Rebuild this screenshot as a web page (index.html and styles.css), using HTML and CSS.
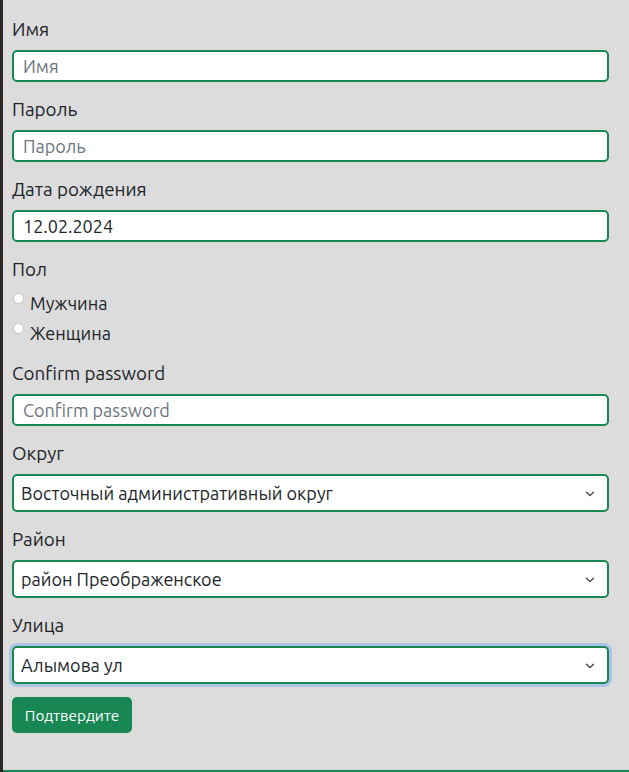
FILE: index.html
```html
<!DOCTYPE html>
<html lang="ru">
<head>
<meta charset="utf-8">
<title>Форма</title>
<link rel="stylesheet" href="styles.css">
</head>
<body>
<div class="page">
  <form class="form">
    <div class="group">
      <label class="label">Имя</label>
      <input class="input" type="text" placeholder="Имя">
    </div>
    <div class="group">
      <label class="label">Пароль</label>
      <input class="input" type="text" placeholder="Пароль">
    </div>
    <div class="group">
      <label class="label">Дата рождения</label>
      <input class="input" type="text" value="12.02.2024">
    </div>
    <div class="group group-radio">
      <label class="label label-radio">Пол</label>
      <div class="radio-row"><span class="radio"></span><span>Мужчина</span></div>
      <div class="radio-row"><span class="radio"></span><span>Женщина</span></div>
    </div>
    <div class="group">
      <label class="label">Confirm password</label>
      <input class="input" type="text" placeholder="Confirm password">
    </div>
    <div class="group">
      <label class="label">Округ</label>
      <div class="select">
        <span class="select-text">Восточный административный округ</span>
        <svg class="chevron" width="10" height="6" viewBox="0 0 10 6"><path d="M1.5 1.2 L5 4.6 L8.5 1.2" fill="none" stroke="#343a40" stroke-width="1.3" stroke-linecap="round" stroke-linejoin="round"/></svg>
      </div>
    </div>
    <div class="group">
      <label class="label">Район</label>
      <div class="select">
        <span class="select-text">район Преображенское</span>
        <svg class="chevron" width="10" height="6" viewBox="0 0 10 6"><path d="M1.5 1.2 L5 4.6 L8.5 1.2" fill="none" stroke="#343a40" stroke-width="1.3" stroke-linecap="round" stroke-linejoin="round"/></svg>
      </div>
    </div>
    <div class="group group-last">
      <label class="label">Улица</label>
      <div class="select select-focus">
        <span class="select-text">Алымова ул</span>
        <svg class="chevron" width="10" height="6" viewBox="0 0 10 6"><path d="M1.5 1.2 L5 4.6 L8.5 1.2" fill="none" stroke="#343a40" stroke-width="1.3" stroke-linecap="round" stroke-linejoin="round"/></svg>
      </div>
    </div>
    <button class="btn" type="button">Подтвердите</button>
  </form>
  <div class="footer-line"></div>
</div>
</body>
</html>
```
FILE: styles.css
```css
* { box-sizing: border-box; }
html, body { margin: 0; padding: 0; }
body {
  background: #dcdcdc;
  font-family: "Ubuntu", "Noto Sans", "Open Sans", sans-serif;
  color: #212529;
  font-size: 18px;
}
.page {
  min-height: 100vh;
  border-left: 3px solid #2b2622;
  display: flex;
  flex-direction: column;
}
.form {
  padding: 18px 20px 0 9px;
  display: flex;
  flex-direction: column;
}
.group {
  display: flex;
  flex-direction: column;
  margin-bottom: 16px;
}
.group-radio { margin-bottom: 14px; }
.group-last { margin-bottom: 13px; }
.label {
  font-size: 18.8px;
  line-height: 22px;
  padding-bottom: 2px;
  margin-bottom: 8px;
}
.label-radio { margin-bottom: 6px; }
.input {
  height: 32px;
  border: 2px solid #198754;
  border-radius: 5px;
  background: #fff;
  padding: 0 9px;
  font-family: inherit;
  font-size: 18px;
  color: #212529;
  outline: none;
}
.input::placeholder { color: #6c757d; }
.radio-row {
  display: flex;
  align-items: flex-start;
  height: 30px;
  line-height: 30px;
  font-size: 18px;
}
.radio {
  width: 11px;
  height: 11px;
  border-radius: 50%;
  background: #fff;
  border: 1px solid #c4c4c4;
  margin: 5px 6px 0 1px;
  flex: none;
}
.select {
  position: relative;
  height: 38px;
  border: 2px solid #198754;
  border-radius: 5px;
  background: #fff;
  display: flex;
  align-items: center;
  padding: 0 7px;
}
.select-focus { box-shadow: 0 0 0 3px #abc4e6; }
.select-text { font-size: 18px; }
.chevron {
  position: absolute;
  right: 12px;
  top: 15px;
}
.btn {
  align-self: flex-start;
  width: 120px;
  height: 36px;
  border: none;
  border-radius: 5px;
  background: #198754;
  color: #fff;
  font-family: inherit;
  font-size: 15.3px;
  padding: 0;
}
.footer-line {
  margin-top: auto;
  height: 2px;
  background: #198754;
}
```
